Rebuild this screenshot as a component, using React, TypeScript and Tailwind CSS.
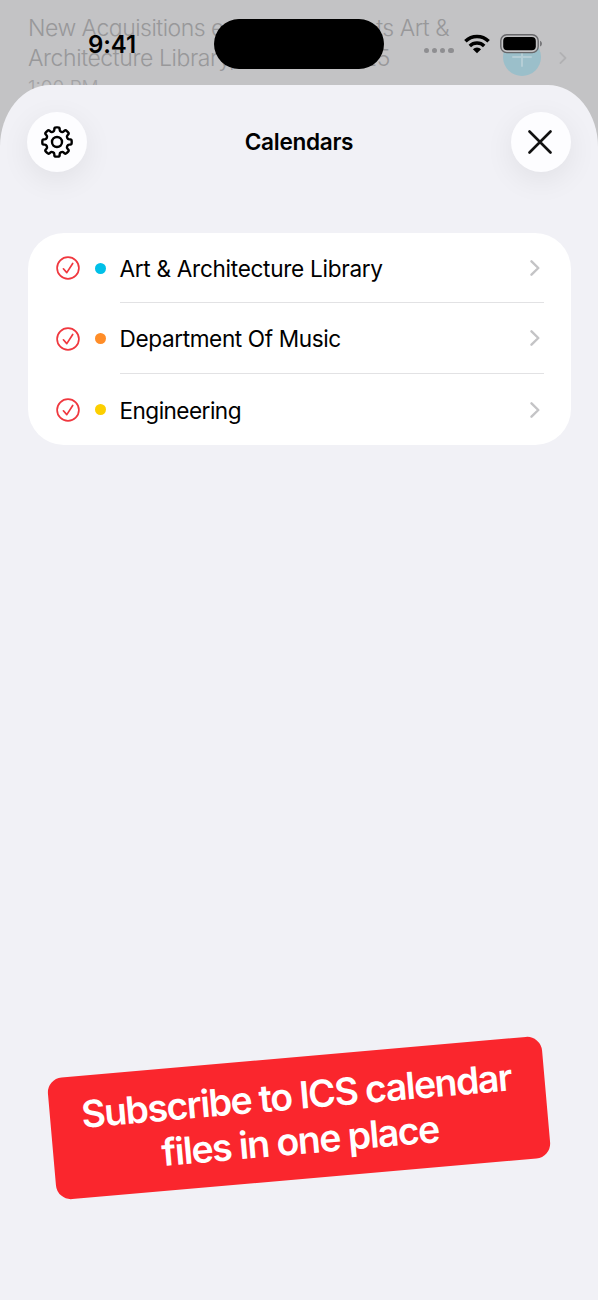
import type { ReactNode } from 'react'

const calendars = [
  { name: 'Art & Architecture Library', dot: 'bg-[#00c0e8]', spacing: 'tracking-[-0.3px]', height: 'h-[70px]' },
  { name: 'Department Of Music', dot: 'bg-[#ff8d28]', spacing: 'tracking-[-0.38px]', height: 'h-[71px]' },
  { name: 'Engineering', dot: 'bg-[#fccf00]', spacing: 'tracking-[-0.55px]', height: 'h-[71px]' },
]

// eight-toothed gear outline with softened corners
function gearPath(cx: number, cy: number) {
  const pts: [number, number][] = []
  const corners = [
    [-14, 11.2],
    [-10, 14.9],
    [10, 14.9],
    [14, 11.2],
  ]
  for (let i = 0; i < 8; i++) {
    for (const [offset, r] of corners) {
      const a = ((i * 45 + offset - 90) * Math.PI) / 180
      pts.push([cx + r * Math.cos(a), cy + r * Math.sin(a)])
    }
  }
  const n = pts.length
  return (
    pts
      .map(([x, y], i) => {
        const [px, py] = pts[(i + n - 1) % n]
        const [nx, ny] = pts[(i + 1) % n]
        const t = 0.35
        const start = `${x + (px - x) * t} ${y + (py - y) * t}`
        const end = `${x + (nx - x) * t} ${y + (ny - y) * t}`
        return `${i ? 'L' : 'M'}${start}Q${x} ${y} ${end}`
      })
      .join('') + 'Z'
  )
}

function GearIcon() {
  return (
    <svg width="32" height="32" viewBox="0 0 32 32" fill="none" stroke="#000" strokeWidth="2.4" strokeLinejoin="round">
      <path d={gearPath(16, 16)} />
      <circle cx="16" cy="16" r="5" />
    </svg>
  )
}

function CloseIcon() {
  return (
    <svg className="mr-[2px]" width="24" height="24" viewBox="0 0 24 24" fill="none" stroke="#111" strokeWidth="2.6" strokeLinecap="round">
      <path d="M1.5 1.5 22.5 22.5M22.5 1.5 1.5 22.5" />
    </svg>
  )
}

function CheckIcon() {
  return (
    <svg width="24" height="24" viewBox="0 0 24 24" fill="none" stroke="#f0383f" strokeWidth="1.7" strokeLinecap="round" strokeLinejoin="round">
      <circle cx="12" cy="12" r="10.9" />
      <path d="M7.4 12.8 10.8 16.6 16.7 7.5" />
    </svg>
  )
}

function ChevronIcon({ className }: { className?: string }) {
  return (
    <svg className={className} width="10" height="16" viewBox="0 0 10 16" fill="none" stroke="currentColor" strokeWidth="2.4" strokeLinecap="round" strokeLinejoin="round">
      <path d="M1.5 1.3 8.3 8 1.5 14.7" />
    </svg>
  )
}

function WifiIcon() {
  return (
    <svg width="26" height="20" viewBox="0 0 26 20" fill="none" stroke="#000" strokeWidth="3.5">
      <path d="M1.4 7.3a16.6 16.6 0 0 1 23.2 0" />
      <path d="M5.8 12a10.4 10.4 0 0 1 14.4 0" />
      <path d="M13 19.3 8.9 15.3a5.8 5.8 0 0 1 8.2 0Z" fill="#000" stroke="none" />
    </svg>
  )
}

function BatteryIcon() {
  return (
    <svg width="43" height="20" viewBox="0 0 43 20" fill="none">
      <rect x="0.8" y="0.8" width="37.4" height="17.8" rx="6" fill="#c3c3c5" stroke="#67676a" strokeWidth="1.4" />
      <rect x="3.2" y="3.1" width="32.6" height="13.2" rx="4" fill="#000" />
      <path d="M40 6.8c2.6.8 2.6 5 0 5.8Z" fill="#77777a" />
    </svg>
  )
}

function RoundButton({ label, children }: { label: string; children: ReactNode }) {
  return (
    <button aria-label={label} className="flex size-[60px] items-center justify-center rounded-full bg-[#fdfdff] shadow-[0_8px_30px_rgba(0,0,0,0.07)]">
      {children}
    </button>
  )
}

function StatusBar() {
  return (
    <div className="absolute inset-x-0 top-0 h-[85px]">
      <div className="absolute left-[88px] top-[31px] text-[24px] leading-[28px] font-semibold tracking-[-0.1px]">9:41</div>
      <div className="absolute left-[214px] top-[19px] h-[50px] w-[170px] rounded-full bg-black" />
      <div className="absolute left-[424px] top-[48px] flex gap-[2.8px]">
        {[0, 1, 2, 3].map((i) => (
          <span key={i} className="size-[5.3px] rounded-full bg-[#8e8e91]" />
        ))}
      </div>
      <div className="absolute left-[464px] top-[34px]">
        <WifiIcon />
      </div>
      <div className="absolute left-[500px] top-[34px]">
        <BatteryIcon />
      </div>
    </div>
  )
}

export default function App() {
  return (
    <div className="relative h-[1300px] w-[598px] overflow-hidden bg-[#c3c3c5] pt-[85px] font-['Inter','Liberation_Sans',sans-serif] text-black">
      {/* dimmed event list behind the sheet */}
      <div className="absolute left-[28px] top-[13px] text-[23px] leading-[30px] font-light whitespace-nowrap text-[#98989a]">
        <p className="flex w-[421px] justify-between tracking-[-0.5px]">
          <span>New Acquisitions exhibit</span>
          <span>Events Art &amp;</span>
        </p>
        <p className="flex w-[362px] justify-between tracking-[-0.4px]">
          <span>Architecture Library,</span>
          <span>2025</span>
        </p>
        <p className="text-[19px] text-[#a2a2a4]">1:00 PM</p>
      </div>
      <div className="absolute left-[503px] top-[38px] flex size-[38px] items-center justify-center rounded-full bg-[#9bbfca]">
        <svg width="20" height="20" viewBox="0 0 20 20" stroke="#b5ced6" strokeWidth="2" strokeLinecap="round">
          <path d="M10 1V19M1 10H19" />
        </svg>
      </div>
      <ChevronIcon className="absolute left-[559px] top-[52px] h-[12px] w-[8px] text-[#b1b1b3]" />

      <StatusBar />

      <main className="relative flex h-[1215px] flex-col rounded-t-[50px_62px] bg-[#f1f1f6] px-[27px] pt-[27px]">
        <header className="flex items-center justify-between">
          <RoundButton label="Settings">
            <GearIcon />
          </RoundButton>
          <h1 className="text-[22.6px] leading-[28px] font-semibold tracking-[-0.3px]">Calendars</h1>
          <RoundButton label="Close">
            <CloseIcon />
          </RoundButton>
        </header>

        <ul className="mx-[0.5px] mt-[61px] rounded-[36px] bg-white pr-[27px] pl-[28px]">
          {calendars.map((calendar, i) => (
            <li key={calendar.name} className={`flex items-stretch ${calendar.height}`}>
              <div className="flex w-[64px] items-center gap-[15.5px]">
                <CheckIcon />
                <span className={`size-[11px] rounded-full ${calendar.dot}`} />
              </div>
              <div className={`flex flex-1 items-center justify-between pr-[3.5px] ${i < calendars.length - 1 ? 'border-b border-[#e2e2e4]' : ''}`}>
                <span className={`pt-[2px] text-[22.6px] leading-[28px] whitespace-nowrap ${calendar.spacing}`}>{calendar.name}</span>
                <ChevronIcon className="text-[#c4c4c6]" />
              </div>
            </li>
          ))}
        </ul>

        <div className="mt-auto mb-[122px] flex h-[121.5px] w-[496px] -rotate-5 items-center justify-center self-center rounded-[15px] bg-[#fa262d]">
          <p className="pr-[2px] text-center text-[37.5px] leading-[45px] font-semibold tracking-[-1.5px] whitespace-nowrap text-white">
            Subscribe to ICS calendar
            <br />
            files in one place
          </p>
        </div>
      </main>
    </div>
  )
}
